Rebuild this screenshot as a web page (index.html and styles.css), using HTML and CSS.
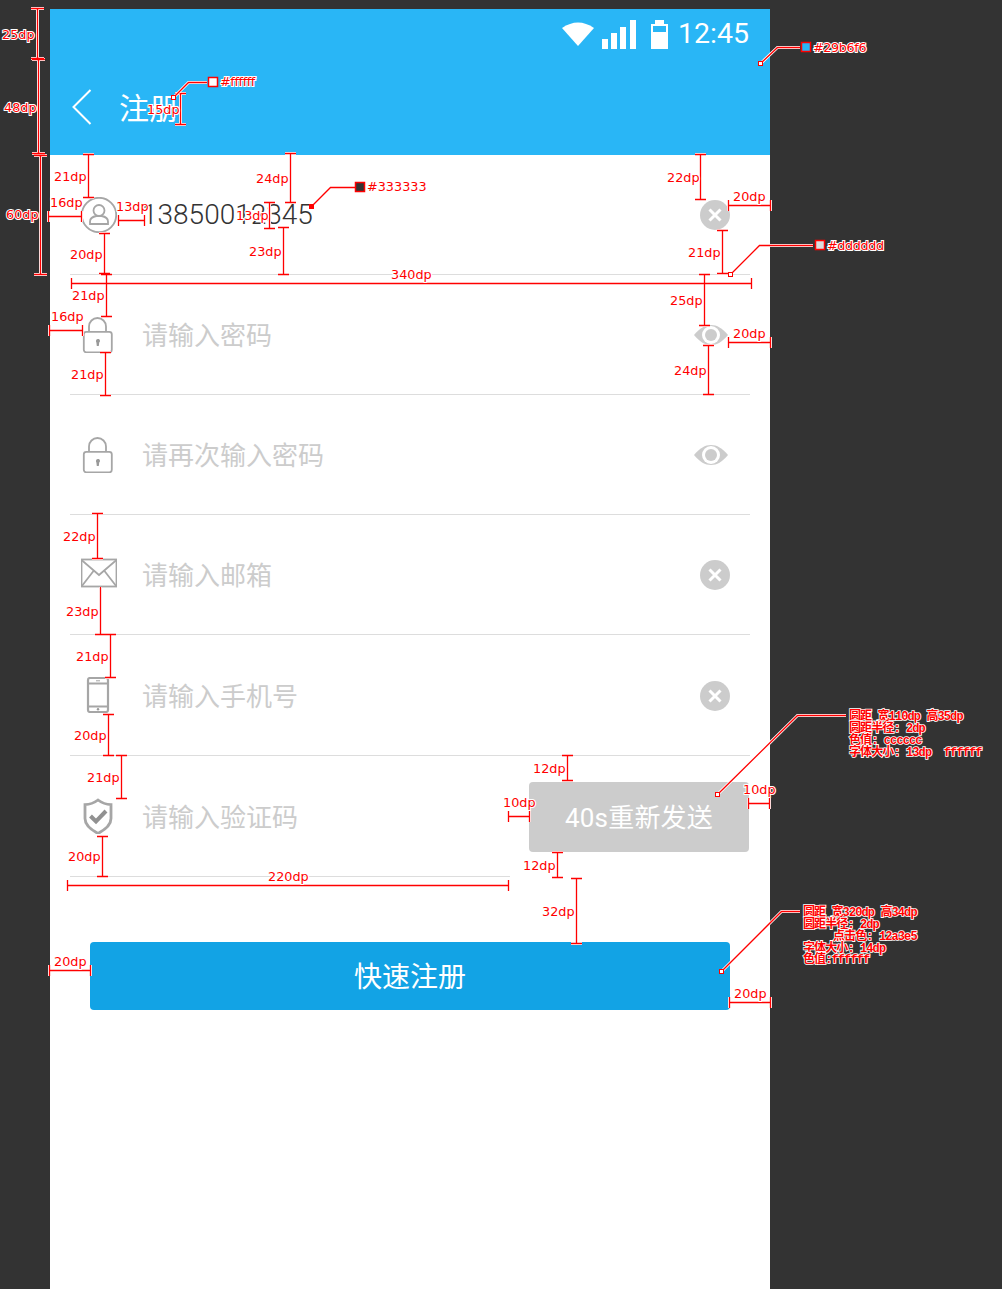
FILE: index.html
```html
<!DOCTYPE html>
<html lang="zh-CN">

<head>
	<meta charset="UTF-8">
	<meta name="viewport" content="width=device-width, initial-scale=1.0">
	<title>注册</title>
	<link rel="stylesheet" href="styles.css">
</head>

<body>
	<div class="phone">
		<div class="header">
			<div class="status">
				<svg class="wifi" width="32" height="24" viewBox="0 0 32 24"><path d="M0 6Q16 -5 32 6L16 24Z" /></svg>
				<svg class="signal" width="34" height="30" viewBox="0 0 34 30">
					<path d="M0 19h6v10H0zM9 13h6v16H9zM18 7h6v22h-6zM28 0h6v29h-6z" />
				</svg>
				<svg class="battery" width="17" height="30" viewBox="0 0 17 30">
					<path fill-rule="evenodd" d="M4 0h9v4h4v25H0V4h4zM2 6v6h13V6z" />
				</svg>
				<span class="time">12:45</span>
			</div>
			<div class="toolbar">
				<svg class="back" width="20" height="36" viewBox="0 0 20 36"><path d="M18.500 1L1.500 18L18.500 35" /></svg>
				<h1 class="title">注册</h1>
			</div>
		</div>

		<div class="row">
			<svg class="icon" width="36" height="36" viewBox="0 0 36 36">
				<circle cx="18" cy="18" r="17.200" />
				<circle cx="18" cy="13.500" r="5.500" />
				<path d="M9 27v-2.500c0-3.500 3.500-5 6.500-5.500h5c3 .5 6.500 2 6.500 5.500V27z" />
			</svg>
			<span class="value">13850012345</span>
			<svg class="clear" width="30" height="30" viewBox="0 0 30 30">
				<circle cx="15" cy="15" r="15" />
				<path d="M9.500 9.500l11 11M20.500 9.500l-11 11" />
			</svg>
		</div>

		<div class="row">
			<svg class="icon" width="36" height="36" viewBox="0 0 36 36">
				<path d="M8 14.500V9.500a8.500 8.500 0 0 1 17 0v5" />
				<rect x="2.800" y="14.800" width="28" height="20.500" rx="2.500" />
				<path class="solid" d="M15 24a2 2 0 1 1 3.200 1.500L17.800 29h-2l-.4-3.500A2 2 0 0 1 15 24z" />
			</svg>
			<span class="hint">请输入密码</span>
			<svg class="eye" width="34" height="20" viewBox="0 0 34 20">
				<path class="lens" d="M0 10C6 3 11 0 17 0S28 3 34 10C28 17 23 20 17 20S6 17 0 10Z" />
				<circle class="ring" cx="17" cy="10" r="9" />
				<circle class="lens" cx="17" cy="10" r="6" />
			</svg>
		</div>

		<div class="row">
			<svg class="icon" width="36" height="36" viewBox="0 0 36 36">
				<path d="M8 14.500V9.500a8.500 8.500 0 0 1 17 0v5" />
				<rect x="2.800" y="14.800" width="28" height="20.500" rx="2.500" />
				<path class="solid" d="M15 24a2 2 0 1 1 3.200 1.500L17.800 29h-2l-.4-3.500A2 2 0 0 1 15 24z" />
			</svg>
			<span class="hint">请再次输入密码</span>
			<svg class="eye" width="34" height="20" viewBox="0 0 34 20">
				<path class="lens" d="M0 10C6 3 11 0 17 0S28 3 34 10C28 17 23 20 17 20S6 17 0 10Z" />
				<circle class="ring" cx="17" cy="10" r="9" />
				<circle class="lens" cx="17" cy="10" r="6" />
			</svg>
		</div>

		<div class="row">
			<svg class="icon" width="36" height="36" viewBox="0 0 36 36">
				<rect x=".500" y="2.500" width="35" height="27" />
				<path d="M.500 3L18 18L35.500 3M.500 29.500L12.500 14M35.500 29.500L23.500 14" />
			</svg>
			<span class="hint">请输入邮箱</span>
			<svg class="clear" width="30" height="30" viewBox="0 0 30 30">
				<circle cx="15" cy="15" r="15" />
				<path d="M9.500 9.500l11 11M20.500 9.500l-11 11" />
			</svg>
		</div>

		<div class="row row-tall">
			<svg class="icon icon-heavy" width="36" height="36" viewBox="0 0 36 36">
				<rect x="7" y="1" width="20" height="34" rx="2" />
				<path d="M7 6.500h20M7 29.500h20" />
				<circle class="solid" cx="17" cy="32.300" r="1.200" />
				<path class="fine" d="M15 3.800h4" />
			</svg>
			<span class="hint">请输入手机号</span>
			<svg class="clear" width="30" height="30" viewBox="0 0 30 30">
				<circle cx="15" cy="15" r="15" />
				<path d="M9.500 9.500l11 11M20.500 9.500l-11 11" />
			</svg>
		</div>

		<div class="code-row">
			<div class="row row-tall code-field">
				<svg class="icon" width="36" height="36" viewBox="0 0 36 36">
					<path class="thick" d="M17 2C21 5 25.500 6.500 30 6.700V20.500c0 7-6.500 11.500-13 15C10.500 32 4 27.500 4 20.500V6.700C8.500 6.500 13 5 17 2z" />
					<path class="tick" d="M9.500 18L15 23.500L25 13" />
				</svg>
				<span class="hint">请输入验证码</span>
			</div>
			<button class="resend" type="button">40s重新发送</button>
		</div>

		<div class="submit-wrap">
			<button class="submit" type="submit">快速注册</button>
		</div>
	</div>

	<!-- redline notes over the design -->
	<svg class="notes" width="1002" height="1289" viewBox="0 0 1002 1289">
		<defs>
			<path id="dims" d="M37.500 8V58M31 8.500h13M31 58.500h13
				M38.500 59V154M32 59.500h13M32 153.500h13
				M40.500 155V274M34 155.500h13M34 274.500h13
				M180.500 93V124M175 93.500h11M175 124.500h11
				M88.500 154V198M83 154.500h11M83 197.500h11
				M290.500 153V202M285 153.500h11M285 202.500h11
				M269.500 202V228M264 202.500h11M264 228.500h11
				M104.500 233V274M99 233.500h11M99 273.500h11
				M283.500 227V274M278 227.500h11M278 274.500h11
				M700.500 154V199M695 154.500h11M695 199.500h11
				M722.500 230V273M717 230.500h11M717 273.500h11
				M106.500 274V316M101 274.500h11M101 316.500h11
				M105.500 352V395M100 352.500h11M100 395.500h11
				M704.500 274V325M699 274.500h11M699 325.500h11
				M708.500 345V394M703 345.500h11M703 394.500h11
				M97.500 513V558M92 513.500h11M92 558.500h11
				M100.500 587V634M95 634.500h11
				M110.500 634V677M105 634.500h11M105 677.500h11
				M108.500 714V755M103 714.500h11M103 755.500h11
				M121.500 755V798M116 755.500h11M116 798.500h11
				M102.500 836V876M97 836.500h11M97 876.500h11
				M567.500 755V780M562 755.500h11M562 780.500h11
				M557.500 852V877M552 852.500h11M552 877.500h11
				M576.500 878V943M571 878.500h11M571 943.500h11
				M48 216.500H81M48.500 211v11M81.500 211v11
				M118 220.500H144M118.500 215v11M144.500 215v11
				M71 283.500H751M71.500 278v11M106.500 278v11M704.500 278v11M751.500 278v11
				M728 205.500H770M728.500 200v11M770.500 200v11
				M49 330.500H82M49.500 325v11M82.500 325v11
				M728 342.500H770M728.500 337v11M770.500 337v11
				M508 816.500H530M508.500 811v11M529.500 811v11
				M748 803.500H770M748.500 798v11M769.500 798v11
				M67 885.500H509M67.500 880v11M508.500 880v11
				M49 970.500H91M49.500 965v11M90.500 965v11
				M729 1002.500H771M729.500 997v11M770.500 997v11" />
			<path id="leads" d="M760.500 63.500L777.500 47.500H800
				M173.500 97.500L188.500 82.500H207
				M311.500 206.500L330.500 187.500H355
				M730.500 274.500L759.500 245.500H813
				M717.500 794.500L797.500 715.500H846
				M721.500 971.500L781.500 911.500H800" />
		</defs>

		<use class="dim-halo" href="#dims" />
		<use class="dim-line" href="#dims" />
		<use class="lead-halo" href="#leads" />
		<use class="lead-line" href="#leads" />

		<rect class="dot" x="758.500" y="61.500" width="4" height="4" />
		<rect class="dot" x="171.500" y="95.500" width="4" height="4" />
		<rect class="dot dot-solid" x="309.500" y="204.500" width="4" height="4" />
		<rect class="dot" x="728.500" y="272.500" width="4" height="4" />
		<rect class="dot" x="715.500" y="792.500" width="4" height="4" />
		<rect class="dot" x="719.500" y="969.500" width="4" height="4" />

		<rect class="swatch swatch-blue" x="801.500" y="42.500" width="9" height="9" />
		<rect class="swatch swatch-white" x="208.500" y="77.500" width="9" height="9" />
		<rect class="swatch swatch-dark" x="355.500" y="182.500" width="9" height="9" />
		<rect class="swatch swatch-grey" x="815.500" y="240.500" width="9" height="9" />

		<g class="labels">
			<text x="2" y="39">25dp</text>
			<text x="4" y="112">48dp</text>
			<text x="6" y="219">60dp</text>
			<text x="147" y="114">15dp</text>
			<text x="54" y="181">21dp</text>
			<text x="50" y="207">16dp</text>
			<text x="116" y="211">13dp</text>
			<text x="236" y="220">13dp</text>
			<text x="256" y="183">24dp</text>
			<text x="70" y="259">20dp</text>
			<text x="249" y="256">23dp</text>
			<text x="667" y="182">22dp</text>
			<text x="733" y="201">20dp</text>
			<text x="688" y="257">21dp</text>
			<text x="391" y="279">340dp</text>
			<text x="72" y="300">21dp</text>
			<text x="51" y="321">16dp</text>
			<text x="71" y="379">21dp</text>
			<text x="670" y="305">25dp</text>
			<text x="733" y="338">20dp</text>
			<text x="674" y="375">24dp</text>
			<text x="63" y="541">22dp</text>
			<text x="66" y="616">23dp</text>
			<text x="76" y="661">21dp</text>
			<text x="74" y="740">20dp</text>
			<text x="87" y="782">21dp</text>
			<text x="533" y="773">12dp</text>
			<text x="503" y="807">10dp</text>
			<text x="743" y="794">10dp</text>
			<text x="523" y="870">12dp</text>
			<text x="68" y="861">20dp</text>
			<text x="268" y="881">220dp</text>
			<text x="542" y="916">32dp</text>
			<text x="54" y="966">20dp</text>
			<text x="734" y="998">20dp</text>
			<text class="narrow" x="220" y="86">#ffffff</text>
			<text class="narrow" x="813" y="52">#29b6f6</text>
			<text class="narrow" x="827" y="250">#dddddd</text>
			<text class="plain" x="367" y="191">#333333</text>
		</g>

		<g class="spec">
			<text x="849" y="720">圆距 宽110dp 高35dp</text>
			<text x="849" y="732">圆距半径: 2dp</text>
			<text x="849" y="744">色值: cccccc</text>
			<text x="849" y="756">字体大小: 13dp  ffffff</text>
			<text x="803" y="916">圆距 宽320dp 高34dp</text>
			<text x="803" y="928">圆距半径: 2dp</text>
			<text x="833" y="940">点击色: 12a3e5</text>
			<text x="803" y="952">字体大小: 14dp</text>
			<text x="803" y="963">色值:ffffff</text>
		</g>
	</svg>
</body>

</html>
```

FILE: styles.css
```css
html, body {
	margin: 0;
	height: 1289px;
	overflow: hidden;
}

body {
	position: relative;
	background-color: #333333;
	font-family: "Noto Sans CJK SC", "Noto Sans", sans-serif;
}

.phone {
	box-sizing: border-box;
	width: 720px;
	height: 1280px;
	margin: 0 0 0 50px;
	position: relative;
	top: 9px;
	background-color: #ffffff;
}

/* header */
.header {
	background-color: #29b6f6;
	color: #ffffff;
}

.status {
	box-sizing: border-box;
	height: 50px;
	padding: 11px 21px 0 0;
	display: flex;
	justify-content: flex-end;
	align-items: flex-start;
}

.status svg {
	fill: #ffffff;
}

.wifi {
	margin-top: 2px;
}

.signal {
	margin-left: 8px;
}

.battery {
	margin-left: 15px;
}

.time {
	margin-left: 10px;
	font-family: Roboto, sans-serif;
	font-weight: 400;
	font-size: 28.500px;
	line-height: 28px;
}

.toolbar {
	height: 96px;
	padding-left: 22px;
	display: flex;
	align-items: center;
}

.back {
	fill: none;
	stroke: #ffffff;
	stroke-width: 2;
}

.title {
	margin: 0 0 2px 27px;
	font-size: 30px;
	font-weight: 400;
}

/* form rows */
.row {
	box-sizing: border-box;
	height: 120px;
	margin: 0 20px;
	padding: 0 20px 0 11px;
	display: flex;
	align-items: center;
	border-bottom: 1px solid #dddddd;
}

.row-tall {
	height: 121px;
}

.row-tall .clear {
	margin-top: 2px;
}

.icon {
	flex: none;
	margin-right: 25px;
	fill: none;
	stroke: #a6a6a6;
	stroke-width: 1.800;
}

.icon-heavy {
	stroke-width: 2.200;
}

.icon .solid {
	fill: #999999;
	stroke: none;
}

.icon .fine {
	stroke-width: 1;
}

.icon .thick {
	stroke-width: 2.800;
}

.icon .tick {
	stroke: #919191;
	stroke-width: 4;
}

.value {
	font-family: Roboto, sans-serif;
	font-weight: 300;
	font-size: 28px;
	color: #333333;
}

.hint {
	margin-bottom: 2px;
	font-size: 26px;
	color: #cccccc;
}

.clear {
	flex: none;
	margin-left: auto;
	fill: #cccccc;
}

.clear path {
	stroke: #ffffff;
	stroke-width: 3;
}

.eye {
	flex: none;
	margin: 0 2px 0 auto;
}

.eye .lens {
	fill: #cccccc;
}

.eye .ring {
	fill: #ffffff;
}

.code-row {
	display: flex;
}

.code-field {
	width: 440px;
	margin-right: 19px;
}

.resend {
	width: 220px;
	height: 70px;
	margin-top: 26px;
	padding: 0 0 4px;
	border: 0;
	border-radius: 4px;
	background-color: #cccccc;
	color: #ffffff;
	font-family: Roboto, "Noto Sans CJK SC", sans-serif;
	font-size: 26px;
	letter-spacing: .2px;
}

.submit-wrap {
	padding: 65px 40px 0;
}

.submit {
	display: block;
	width: 640px;
	height: 68px;
	padding: 0 0 2px;
	border: 0;
	border-radius: 4px;
	background-color: #12a3e5;
	color: #ffffff;
	font-family: "Noto Sans CJK SC", sans-serif;
	font-size: 28px;
}

/* redline overlay */
.notes {
	position: absolute;
	left: 0;
	top: 0;
	fill: none;
}

.dim-halo, .lead-halo {
	stroke: #ffffff;
	stroke-width: 3;
	fill: none;
}

.dim-line, .lead-line {
	stroke: #ff0000;
	stroke-width: 1.300;
	fill: none;
}

.dot {
	fill: #ffffff;
	stroke: #ff0000;
}

.dot-solid {
	fill: #ff0000;
}

.swatch {
	stroke: #ff0000;
	stroke-width: 1.500;
}

.swatch-blue {
	fill: #29b6f6;
}

.swatch-white {
	fill: #ffffff;
}

.swatch-dark {
	fill: #333333;
}

.swatch-grey {
	fill: #dddddd;
}

.labels text {
	fill: #ff0000;
	stroke: #ffffff;
	stroke-width: 2;
	paint-order: stroke;
	font-family: "DejaVu Sans", sans-serif;
	font-size: 12.800px;
}

.labels .narrow {
	letter-spacing: -.4px;
}

.labels .plain {
	stroke: none;
}

.spec text {
	fill: #ff0000;
	stroke: #ffffff;
	stroke-width: 1.600;
	paint-order: stroke;
	font-family: "Liberation Mono", "Noto Sans CJK SC", monospace;
	font-size: 12px;
	font-weight: 700;
	letter-spacing: -.9px;
	white-space: pre;
}
```
